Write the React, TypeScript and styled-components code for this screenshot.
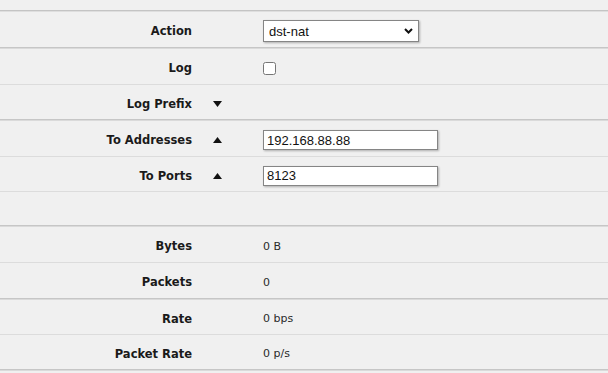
import React from "react";
import styled, { createGlobalStyle, css } from "styled-components";

const Global = createGlobalStyle`
  html, body { margin: 0; padding: 0; background: #f0f0f0; }
  body { font-family: "DejaVu Sans", Verdana, sans-serif; font-size: 11px; color: #1e1e1e; }
`;

const Page = styled.div`
  width: 608px;
  height: 373px;
  padding-top: 10px;
  box-sizing: border-box;
  background: #f0f0f0;
  overflow: hidden;
`;

const Table = styled.div`
  display: flex;
  flex-direction: column;
  border-top: 1px solid #c4c4c4;
  box-shadow: inset 0 1px 0 #dedede;
  padding-top: 1px;
`;

type Sep = "single" | "double";

const Row = styled.div<{ $sep: Sep; $h: number }>`
  display: grid;
  grid-template-columns: 192px 71px 1fr;
  align-items: center;
  height: ${(p) => p.$h - 3}px;
  padding-top: 3px;
  box-sizing: content-box;
  ${(p) =>
    p.$sep === "double"
      ? css`
          border-bottom: 1px solid #c6c6c6;
          box-shadow: 0 1px 0 #dadada;
          margin-bottom: 1px;
        `
      : css`
          border-bottom: 1px solid #dcdcdc;
        `}
`;

const Label = styled.div`
  text-align: right;
  font-weight: bold;
  font-size: 11.5px;
  color: #1a1a1a;
  white-space: nowrap;
`;

const ArrowCell = styled.div`
  display: flex;
  align-items: center;
  padding-left: 21px;
`;

const Value = styled.div`
  display: flex;
  align-items: center;
  font-size: 11px;
  color: #2a2a2a;
`;

const SelectWrap = styled.div`
  position: relative;
  width: 156px;
  height: 22px;
`;

const Select = styled.select`
  appearance: none;
  -webkit-appearance: none;
  width: 100%;
  height: 100%;
  box-sizing: border-box;
  border: 1px solid #858585;
  background: #fff;
  box-shadow: 1px 1px 2px rgba(0, 0, 0, 0.28);
  font-family: "Liberation Sans", Arial, sans-serif;
  font-size: 13px;
  color: #111;
  padding: 0 0 0 5px;
  margin: 0;
  outline: none;
`;

const Chevron = styled.svg`
  position: absolute;
  right: 6px;
  top: 8px;
  pointer-events: none;
`;

const TextInput = styled.input`
  width: 175px;
  height: 20px;
  box-sizing: border-box;
  border: 1px solid #858585;
  background: #fff;
  box-shadow: 1px 1px 2px rgba(0, 0, 0, 0.28);
  font-family: "Liberation Sans", Arial, sans-serif;
  font-size: 13px;
  color: #111;
  padding: 0 0 0 3px;
  margin: 0;
  outline: none;
`;

const Check = styled.input`
  width: 13px;
  height: 13px;
  margin: 0;
`;

const Triangle = ({ up }: { up?: boolean }) => (
  <svg width="9" height="6" viewBox="0 0 9 6">
    {up ? (
      <polygon points="0,6 9,6 4.5,0" fill="#111" />
    ) : (
      <polygon points="0,0 9,0 4.5,6" fill="#111" />
    )}
  </svg>
);

export default function App() {
  return (
    <Page>
      <Global />
      <Table>
        <Row $sep="double" $h={35}>
          <Label>Action</Label>
          <ArrowCell />
          <Value>
            <SelectWrap>
              <Select defaultValue="dst-nat">
                <option value="dst-nat">dst-nat</option>
                <option value="src-nat">src-nat</option>
                <option value="masquerade">masquerade</option>
              </Select>
              <Chevron width="9" height="6" viewBox="0 0 9 6">
                <polyline points="1,1 4.5,4.5 8,1" fill="none" stroke="#111" strokeWidth="2" />
              </Chevron>
            </SelectWrap>
          </Value>
        </Row>
        <Row $sep="single" $h={35}>
          <Label>Log</Label>
          <ArrowCell />
          <Value>
            <Check type="checkbox" />
          </Value>
        </Row>
        <Row $sep="double" $h={34}>
          <Label>Log Prefix</Label>
          <ArrowCell>
            <Triangle />
          </ArrowCell>
          <Value />
        </Row>
        <Row $sep="single" $h={35}>
          <Label>To Addresses</Label>
          <ArrowCell>
            <Triangle up />
          </ArrowCell>
          <Value>
            <TextInput defaultValue="192.168.88.88" />
          </Value>
        </Row>
        <Row $sep="single" $h={34}>
          <Label>To Ports</Label>
          <ArrowCell>
            <Triangle up />
          </ArrowCell>
          <Value>
            <TextInput defaultValue="8123" />
          </Value>
        </Row>
        <Row $sep="double" $h={33}>
          <Label />
          <ArrowCell />
          <Value />
        </Row>
        <Row $sep="single" $h={35}>
          <Label>Bytes</Label>
          <ArrowCell />
          <Value>0 B</Value>
        </Row>
        <Row $sep="double" $h={35}>
          <Label>Packets</Label>
          <ArrowCell />
          <Value>0</Value>
        </Row>
        <Row $sep="single" $h={34}>
          <Label>Rate</Label>
          <ArrowCell />
          <Value>0 bps</Value>
        </Row>
        <Row $sep="double" $h={34}>
          <Label>Packet Rate</Label>
          <ArrowCell />
          <Value>0 p/s</Value>
        </Row>
      </Table>
    </Page>
  );
}
